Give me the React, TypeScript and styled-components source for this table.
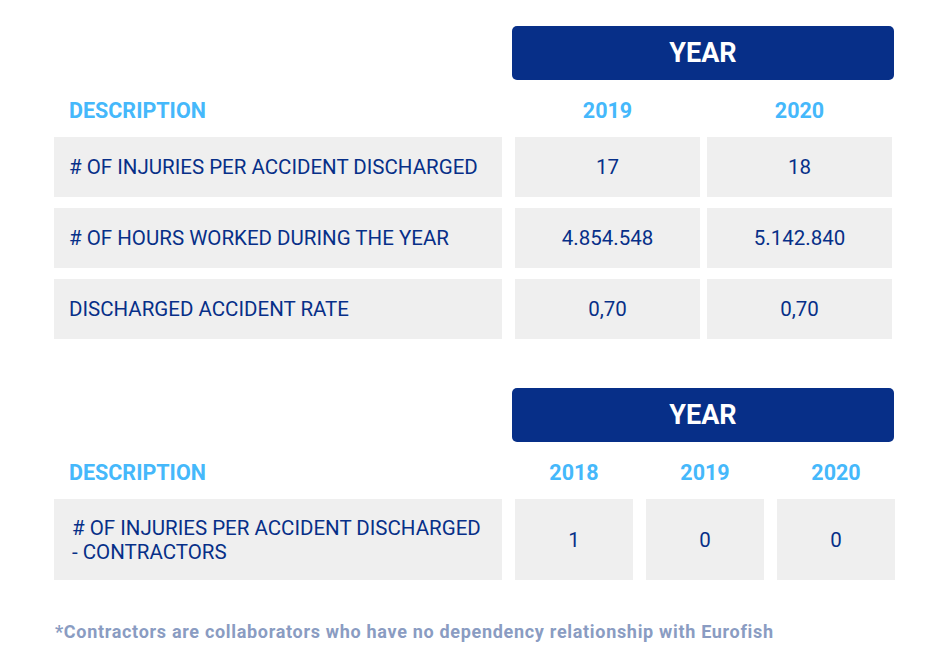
import React from "react";
import styled, { createGlobalStyle } from "styled-components";

const Global = createGlobalStyle`
  html, body { margin: 0; padding: 0; background: #ffffff; }
  body { font-family: Roboto, "Liberation Sans", Arial, sans-serif; }
`;

const NAVY = "#072f88";
const SKY = "#45b8fb";
const CELL = "#efefef";

const Page = styled.div`
  width: 947px;
  height: 669px;
  box-sizing: border-box;
  padding: 26px 0 0 54px;
`;

const Table = styled.section<{ $mt?: number }>`
  display: grid;
  grid-template-columns: 448px max-content;
  column-gap: 13px;
  margin-top: ${(p) => p.$mt ?? 0}px;
`;

const YearBar = styled.div`
  grid-column: 2;
  width: 382px;
  height: 54px;
  margin-left: -3px;
  background: ${NAVY};
  border-radius: 5px;
  color: #ffffff;
  font-weight: 700;
  font-size: 27px;
  display: flex;
  align-items: center;
  justify-content: center;
`;

const HeadLabel = styled.div`
  grid-column: 1;
  height: 57px;
  box-sizing: border-box;
  padding: 3px 0 0 15px;
  display: flex;
  align-items: center;
  color: ${SKY};
  font-weight: 700;
  font-size: 21.5px;
`;

const YearCols = styled.div<{ $cols: number; $w: number; $gap: number }>`
  display: grid;
  grid-template-columns: repeat(${(p) => p.$cols}, ${(p) => p.$w}px);
  column-gap: ${(p) => p.$gap}px;
`;

const YearHead = styled.div`
  height: 57px;
  box-sizing: border-box;
  padding-top: 3px;
  display: flex;
  align-items: center;
  justify-content: center;
  color: ${SKY};
  font-weight: 700;
  font-size: 21.5px;
`;

const Rows = styled.div`
  grid-column: 1 / span 2;
  display: grid;
  grid-template-columns: 448px max-content;
  column-gap: 13px;
  row-gap: 11px;
`;

const DescCell = styled.div<{ $h: number; $pl: number }>`
  height: ${(p) => p.$h}px;
  background: ${CELL};
  display: flex;
  align-items: center;
  padding-left: ${(p) => p.$pl}px;
  box-sizing: border-box;
  color: ${NAVY};
  font-size: 20.5px;
  line-height: 24px;
`;

const ValueCell = styled.div<{ $h: number }>`
  height: ${(p) => p.$h}px;
  background: ${CELL};
  display: flex;
  align-items: center;
  justify-content: center;
  color: ${NAVY};
  font-size: 20.5px;
`;

const Note = styled.p`
  margin: 41px 0 0 1px;
  color: #8a9cc2;
  font-weight: 700;
  font-size: 18px;
  letter-spacing: 0.69px;
  line-height: 21px;
`;

type Row = { desc: React.ReactNode; values: string[] };

const table1: Row[] = [
  { desc: "# OF INJURIES PER ACCIDENT DISCHARGED", values: ["17", "18"] },
  { desc: "# OF HOURS WORKED DURING THE YEAR", values: ["4.854.548", "5.142.840"] },
  { desc: "DISCHARGED ACCIDENT RATE", values: ["0,70", "0,70"] },
];

const table2: Row[] = [
  {
    desc: (
      <>
        # OF INJURIES PER ACCIDENT DISCHARGED
        <br />- CONTRACTORS
      </>
    ),
    values: ["1", "0", "0"],
  },
];

function DataTable({
  years,
  rows,
  w,
  gap,
  h,
  pl,
  mt,
}: {
  years: string[];
  rows: Row[];
  w: number;
  gap: number;
  h: number;
  pl: number;
  mt?: number;
}) {
  return (
    <Table $mt={mt}>
      <YearBar>YEAR</YearBar>
      <HeadLabel>DESCRIPTION</HeadLabel>
      <YearCols $cols={years.length} $w={w} $gap={gap}>
        {years.map((y) => (
          <YearHead key={y}>{y}</YearHead>
        ))}
      </YearCols>
      <Rows>
        {rows.map((r, i) => (
          <React.Fragment key={i}>
            <DescCell $h={h} $pl={pl}>{r.desc}</DescCell>
            <YearCols $cols={years.length} $w={w} $gap={gap}>
              {r.values.map((v, j) => (
                <ValueCell key={j} $h={h}>{v}</ValueCell>
              ))}
            </YearCols>
          </React.Fragment>
        ))}
      </Rows>
    </Table>
  );
}

export default function App() {
  return (
    <>
      <Global />
      <Page>
        <DataTable years={["2019", "2020"]} rows={table1} w={185} gap={7} h={60} pl={15} />
        <DataTable years={["2018", "2019", "2020"]} rows={table2} w={118} gap={13} h={81} pl={18} mt={49} />
        <Note>*Contractors are collaborators who have no dependency relationship with Eurofish</Note>
      </Page>
    </>
  );
}
